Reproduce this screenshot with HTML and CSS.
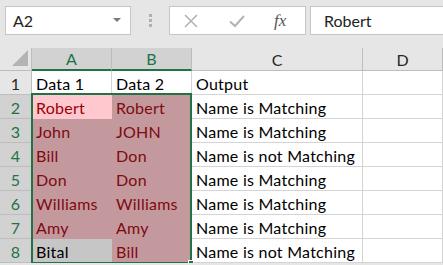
FILE: index.html
```html
<!DOCTYPE html>
<html lang="en">
<head>
    <meta charset="UTF-8">
    <title>Name matching</title>
    <link rel="stylesheet" href="styles.css">
</head>
<body>
    <div class="formula-bar">
        <div class="name-box">
            <span>A2</span>
            <svg class="caret" width="8" height="5" viewBox="0 0 8 5"><path d="M0 0h8L4 4z" fill="#7a7a7a"/></svg>
        </div>
        <div class="grip"><i></i><i></i><i></i></div>
        <div class="fx-buttons">
            <svg width="14" height="14" viewBox="0 0 14 14"><path d="M1 1L13 13M13 1L1 13" stroke="#b4b4b4" stroke-width="1.6"/></svg>
            <svg width="16" height="14" viewBox="0 0 16 14"><path d="M1 7.5L6 12L15 2" stroke="#b4b4b4" stroke-width="2" fill="none"/></svg>
            <span class="fx">fx</span>
        </div>
        <div class="formula-input">Robert</div>
    </div>

    <div class="sheet">
        <div class="hd corner"><span class="tri"></span></div>
        <div class="hd col sel">A</div>
        <div class="hd col sel">B</div>
        <div class="hd col">C</div>
        <div class="hd col">D</div>

        <div class="hd row">1</div>
        <div class="cell">Data 1</div>
        <div class="cell">Data 2</div>
        <div class="cell">Output</div>
        <div class="cell"></div>

        <div class="hd row sel">2</div>
        <div class="cell active">Robert</div>
        <div class="cell bad">Robert</div>
        <div class="cell">Name is Matching</div>
        <div class="cell"></div>

        <div class="hd row sel">3</div>
        <div class="cell bad">John</div>
        <div class="cell bad">JOHN</div>
        <div class="cell">Name is Matching</div>
        <div class="cell"></div>

        <div class="hd row sel">4</div>
        <div class="cell bad">Bill</div>
        <div class="cell bad">Don</div>
        <div class="cell">Name is not Matching</div>
        <div class="cell"></div>

        <div class="hd row sel">5</div>
        <div class="cell bad">Don</div>
        <div class="cell bad">Don</div>
        <div class="cell">Name is Matching</div>
        <div class="cell"></div>

        <div class="hd row sel">6</div>
        <div class="cell bad">Williams</div>
        <div class="cell bad">Williams</div>
        <div class="cell">Name is Matching</div>
        <div class="cell"></div>

        <div class="hd row sel">7</div>
        <div class="cell bad">Amy</div>
        <div class="cell bad">Amy</div>
        <div class="cell">Name is Matching</div>
        <div class="cell"></div>

        <div class="hd row sel">8</div>
        <div class="cell plain-sel">Bital</div>
        <div class="cell bad">Bill</div>
        <div class="cell">Name is not Matching</div>
        <div class="cell"></div>

        <div class="selection"><span class="handle"></span></div>
    </div>
</body>
</html>
```

FILE: styles.css
```css
:root {
    --excel-green: #217346;
    --grid: #d4d4d4;
    --hd-line: #bdbdbd;
}

* { box-sizing: border-box; }

body {
    margin: 0;
    background: #e6e6e6;
    font-family: 'Lato', 'Liberation Sans', sans-serif;
    font-size: 16px;
    color: #000;
    overflow: hidden;
}

/* barre de formule */
.formula-bar {
    height: 48px;
    padding: 6px 0 0 5px;
    display: flex;
    align-items: flex-start;
}

.name-box {
    width: 126px;
    height: 29px;
    background: #fff;
    border: 1px solid #c6c6c6;
    display: flex;
    align-items: center;
    justify-content: space-between;
    padding: 0 9px 0 7px;
    color: #222;
}

.grip {
    width: 38px;
    height: 29px;
    display: flex;
    flex-direction: column;
    align-items: center;
    justify-content: center;
    gap: 2px;
}

.grip i {
    width: 3px;
    height: 3px;
    background: #b0b0b0;
}

.fx-buttons {
    width: 137px;
    height: 29px;
    background: #fff;
    border: 1px solid #c6c6c6;
    display: flex;
    align-items: center;
    padding: 0 0 0 14px;
    gap: 31px;
}

.fx {
    font-family: 'Liberation Serif', serif;
    font-style: italic;
    font-size: 17px;
    color: #555;
    margin-left: -2px;
}

.formula-input {
    flex: 1;
    height: 29px;
    margin-left: 4px;
    background: #fff;
    border: 1px solid #c6c6c6;
    border-right: none;
    padding: 0 0 0 13px;
    display: flex;
    align-items: center;
    color: #222;
}

/* feuille */
.sheet {
    position: relative;
    display: grid;
    grid-template-columns: 32px 80px 80px 171px 80px;
    grid-template-rows: 23px repeat(8, 24px);
    background: #fff;
}

.hd {
    background: #e6e6e6;
    color: #262626;
    display: flex;
    align-items: flex-end;
    justify-content: center;
    border-right: 1px solid var(--hd-line);
    border-bottom: 1px solid var(--hd-line);
}

.hd.col { padding-bottom: 1px; }
.hd.row { padding-bottom: 1px; }

.hd.sel {
    background: #d2d2d2;
    color: var(--excel-green);
}

.hd.col.sel { border-bottom: 2px solid var(--excel-green); }

.corner {
    align-items: flex-end;
    justify-content: flex-end;
    padding: 0 3px 4px 0;
}

.tri {
    width: 0;
    height: 0;
    border-left: 16px solid transparent;
    border-bottom: 16px solid #b4b4b4;
}

.cell {
    border-right: 1px solid var(--grid);
    border-bottom: 1px solid var(--grid);
    display: flex;
    align-items: flex-end;
    padding: 0 0 1px 4px;
    white-space: nowrap;
    letter-spacing: 0.25px;
}

.cell.bad {
    background: #c4999e;
    border-color: #c4999e;
    color: #7e0a10;
}

.cell.active {
    background: #ffc7ce;
    border-color: #ffc7ce;
    color: #9c0006;
}

.cell.plain-sel {
    background: #c6c6c6;
    border-color: #c6c6c6;
}

/* sélection A2:B8, posée par-dessus la grille */
.selection {
    position: absolute;
    grid-column: 2 / 4;
    grid-row: 3 / 10;
    top: -2px;
    left: -1px;
    right: 0;
    bottom: -1px;
    border: 2px solid var(--excel-green);
    pointer-events: none;
}

.handle {
    position: absolute;
    right: -4px;
    bottom: -4px;
    width: 6px;
    height: 6px;
    background: var(--excel-green);
    border: 1px solid #fff;
}
```
